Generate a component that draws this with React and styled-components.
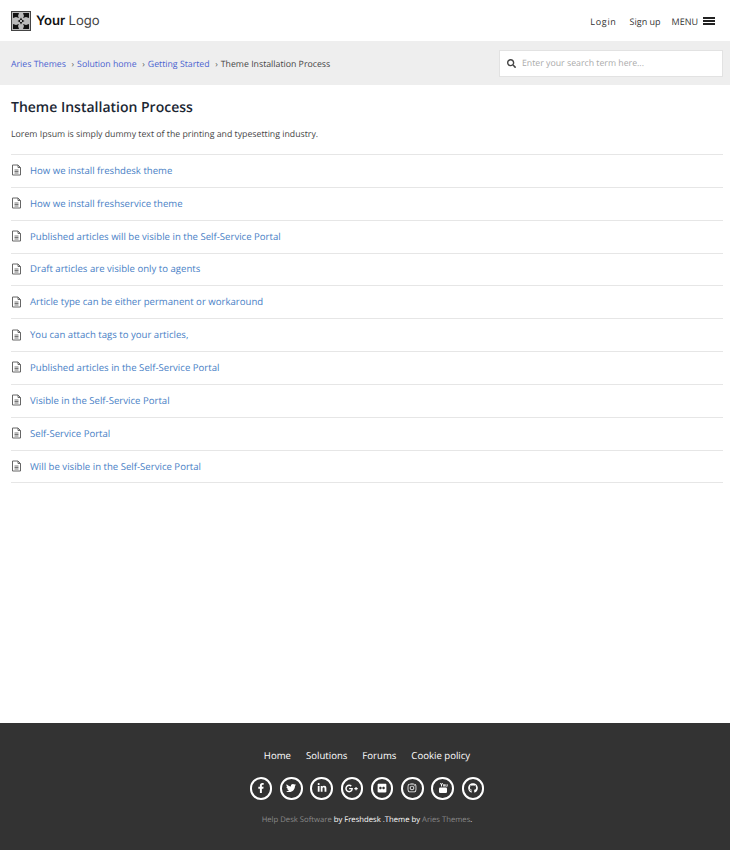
import styled, { createGlobalStyle } from "styled-components";
import {
  FaFacebookF,
  FaTwitter,
  FaLinkedinIn,
  FaGooglePlusG,
  FaFlickr,
  FaInstagram,
  FaGithub,
  FaSearch,
} from "react-icons/fa";

const GlobalStyle = createGlobalStyle`
  html, body {
    margin: 0;
    padding: 0;
    background: #fff;
    font-family: "Open Sans", "Liberation Sans", sans-serif;
    text-rendering: geometricPrecision;
  }
  * { box-sizing: border-box; }
`;

const Page = styled.div`
  width: 730px;
  height: 850px;
  display: flex;
  flex-direction: column;
  overflow: hidden;
`;

const Header = styled.header`
  height: 41px;
  padding: 0 15px 0 11px;
  display: flex;
  align-items: center;
  justify-content: space-between;
`;

const Brand = styled.div`
  display: flex;
  align-items: center;
  gap: 5px;
`;

const BrandText = styled.span`
  font-family: Inter, "Liberation Sans", sans-serif;
  font-size: 13.1px;
  font-weight: 600;
  color: #111;
  span { font-weight: 400; color: #444; }
`;

const Nav = styled.nav`
  display: flex;
  align-items: center;
  padding-top: 1px;
  font-size: 9px;
  color: #333;
`;

const NavLink = styled.a`
  margin-right: ${({ $gap }) => $gap}px;
  letter-spacing: ${({ $spaced }) => ($spaced ? "0.7px" : "0")};
`;

const MenuIcon = styled.span`
  width: 12px;
  height: 8px;
  margin-left: 5px;
  border-top: 2px solid #222;
  border-bottom: 2px solid #222;
  position: relative;
  &::after {
    content: "";
    position: absolute;
    left: 0;
    right: 0;
    top: 1px;
    height: 2px;
    background: #222;
  }
`;

const SubBar = styled.div`
  height: 44px;
  background: #eee;
  padding: 0 7px 0 11px;
  display: flex;
  align-items: center;
  justify-content: space-between;
`;

const Crumbs = styled.div`
  display: flex;
  align-items: center;
  padding-top: 1px;
  font-size: 8.75px;
  color: #444;
`;

const Crumb = styled.a`
  color: #4a62d0;
`;

const Sep = styled.span`
  margin: 0 3px 0 5.5px;
  color: #555;
`;

const Search = styled.div`
  width: 224px;
  height: 27px;
  background: #fff;
  border: 1px solid #e2e2e2;
  display: flex;
  align-items: center;
  padding-left: 7px;
  gap: 6px;
  font-size: 8.75px;
  color: #aaa;
  svg { color: #444; width: 9px; height: 9px; }
`;

const Main = styled.main`
  flex: 1;
  padding: 0 7px 0 11px;
`;

const Title = styled.h1`
  margin: 14px 0 0;
  font-size: 14px;
  line-height: 18px;
  font-weight: 600;
  color: #1c2733;
`;

const Lead = styled.p`
  margin: 9px 0 0;
  font-size: 8.75px;
  line-height: 16px;
  color: #444;
`;

const List = styled.ul`
  list-style: none;
  margin: 12px 0 0;
  padding: 0;
  border-top: 1px solid #e6e6e6;
`;

const Row = styled.li`
  height: 32.85px;
  padding-bottom: 1px;
  border-bottom: 1px solid #e6e6e6;
  display: flex;
  align-items: center;
  gap: 8px;
  font-size: 9.6px;
  color: #4a7fc6;
`;

const Footer = styled.footer`
  height: 127px;
  background: #333;
  display: flex;
  flex-direction: column;
  align-items: center;
  padding: 25px 0 0 4px;
`;

const FooterNav = styled.div`
  display: flex;
  gap: 15px;
  font-size: 9.6px;
  line-height: 16px;
  color: #fff;
`;

const Socials = styled.div`
  display: flex;
  gap: 7.8px;
  margin-top: 13px;
`;

const Social = styled.a`
  width: 22.5px;
  height: 22.5px;
  border: 2px solid #fff;
  border-radius: 50%;
  color: #fff;
  display: flex;
  align-items: center;
  justify-content: center;
  svg { width: ${({ $wide }) => ($wide ? 13 : 10)}px; height: ${({ $wide }) => ($wide ? 13 : 10)}px; }
`;

const Credit = styled.div`
  margin-top: 14px;
  font-size: 7.7px;
  line-height: 12px;
  color: #fff;
  a { color: #888; }
`;

// logo mark, black corners around a grey cross
const LogoMark = () => (
  <svg width="20" height="20" viewBox="0 0 20 20">
    <rect x="0.5" y="0.5" width="19" height="19" fill="#bbb" stroke="#444" />
    <path d="M2 2h6l-1 3 1 2-3-1-3 1zM18 2h-6l1 3-1 2 3-1 3 1zM2 18h6l-1-3 1-2-3 1-3-1zM18 18h-6l1-3-1-2 3 1 3-1z" fill="#111" />
    <path d="M10 6.5l1.2 2.3 2.3 1.2-2.3 1.2-1.2 2.3-1.2-2.3-2.3-1.2 2.3-1.2z" fill="#111" />
    <path d="M10 8.8l1.2 1.2-1.2 1.2-1.2-1.2z" fill="#fff" />
  </svg>
);

const DocIcon = () => (
  <svg width="11" height="12" viewBox="0 0 11 12" fill="none" stroke="#666" strokeWidth="1">
    <path d="M1.5 1h5.5l2.5 2.5v7.5h-8z" />
    <path d="M7 1v2.5h2.5" />
    <path d="M3.5 6h4M3.5 7.5h4M3.5 9h4" strokeWidth="0.9" />
  </svg>
);

// the old stacked "You / tube" mark, which the icon packages no longer have
const YoutubeStacked = () => (
  <svg viewBox="0 0 10 10" fill="currentColor">
    <path d="M2 0h1l.5 1.2L4 0h1L4 2v1.6H3V2zM5.2 1.2h1.6v2.4H5.2zM7.4 1.2h.8v1.8h.6V1.2h.8v2.4H7.4z" />
    <rect x="1" y="4.4" width="8" height="5.6" rx="1.2" />
  </svg>
);

const articles = [
  "How we install freshdesk theme",
  "How we install freshservice theme",
  "Published articles will be visible in the Self-Service Portal",
  "Draft articles are visible only to agents",
  "Article type can be either permanent or workaround",
  "You can attach tags to your articles,",
  "Published articles in the Self-Service Portal",
  "Visible in the Self-Service Portal",
  "Self-Service Portal",
  "Will be visible in the Self-Service Portal",
];

const socialIcons = [
  { name: "facebook", Icon: FaFacebookF },
  { name: "twitter", Icon: FaTwitter },
  { name: "linkedin", Icon: FaLinkedinIn },
  { name: "google", Icon: FaGooglePlusG, wide: true },
  { name: "flickr", Icon: FaFlickr },
  { name: "instagram", Icon: FaInstagram },
  { name: "youtube", Icon: YoutubeStacked },
  { name: "github", Icon: FaGithub },
];

const App = () => {
  return (
    <Page>
      <GlobalStyle />
      <Header>
        <Brand>
          <LogoMark />
          <BrandText>Your <span>Logo</span></BrandText>
        </Brand>
        <Nav>
          <NavLink $gap={13} $spaced>Login</NavLink>
          <NavLink $gap={11}>Sign up</NavLink>
          <span>MENU</span>
          <MenuIcon />
        </Nav>
      </Header>
      <SubBar>
        <Crumbs>
          <Crumb>Aries Themes</Crumb>
          <Sep>›</Sep>
          <Crumb>Solution home</Crumb>
          <Sep>›</Sep>
          <Crumb>Getting Started</Crumb>
          <Sep>›</Sep>
          <span>Theme Installation Process</span>
        </Crumbs>
        <Search>
          <FaSearch />
          <span>Enter your search term here...</span>
        </Search>
      </SubBar>
      <Main>
        <Title>Theme Installation Process</Title>
        <Lead>Lorem Ipsum is simply dummy text of the printing and typesetting industry.</Lead>
        <List>
          {articles.map((article) => (
            <Row key={article}>
              <DocIcon />
              {article}
            </Row>
          ))}
        </List>
      </Main>
      <Footer>
        <FooterNav>
          <a>Home</a>
          <a>Solutions</a>
          <a>Forums</a>
          <a>Cookie policy</a>
        </FooterNav>
        <Socials>
          {socialIcons.map(({ name, Icon, wide }) => (
            <Social key={name} $wide={wide}><Icon /></Social>
          ))}
        </Socials>
        <Credit>
          <a>Help Desk Software</a> by Freshdesk .Theme by <a>Aries Themes</a>.
        </Credit>
      </Footer>
    </Page>
  );
};

export default App;
